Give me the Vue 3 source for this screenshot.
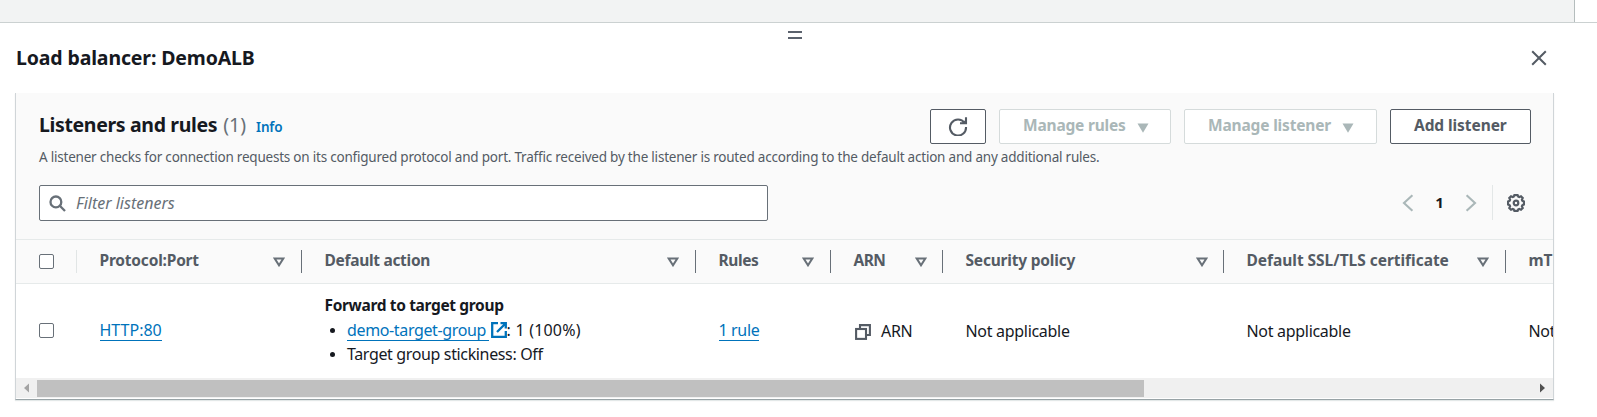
<script setup>
const columns = [
  { label: 'Protocol:Port', cls: 'c-port' },
  { label: 'Default action', cls: 'c-action' },
  { label: 'Rules', cls: 'c-rules' },
  { label: 'ARN', cls: 'c-arn' },
  { label: 'Security policy', cls: 'c-policy' },
  { label: 'Default SSL/TLS certificate', cls: 'c-cert' }
]
</script>

<template>
  <div class="page">
    <div class="backdrop"><div class="backdrop-main"></div></div>
    <section class="panel">
      <div class="handle"><i></i><i></i></div>
      <header class="panel-head">
        <h2 class="title">Load balancer: DemoALB</h2>
        <svg class="close" width="16" height="16" viewBox="0 0 16 16"><path d="M1.2 1.2 14.8 14.8M14.8 1.2 1.2 14.8" /></svg>
      </header>

      <div class="card">
        <div class="tools">
          <div class="row-top">
            <div class="heading">
              <span class="h-text">Listeners and rules</span>
              <span class="h-count">(1)</span>
              <a class="h-info">Info</a>
            </div>
            <div class="buttons">
              <button class="btn refresh">
                <svg width="20" height="20" viewBox="0 0 20 20"><path class="arc" d="M16.6 7A8 8 0 1 0 18 11" /><path class="arc" d="M18 1.2V7.2H12" /><path class="head" d="M13.6 7.2 18 3.6V7.2Z" /></svg>
              </button>
              <button class="btn off rules"><span class="t-mr">Manage rules</span><svg width="12" height="10" viewBox="0 0 12 10"><path d="M0.5 0.6H11.5L6 9.8Z" /></svg></button>
              <button class="btn off listener"><span class="t-ml">Manage listener</span><svg width="12" height="10" viewBox="0 0 12 10"><path d="M0.5 0.6H11.5L6 9.8Z" /></svg></button>
              <button class="btn add"><span class="t-add">Add listener</span></button>
            </div>
          </div>
          <p class="desc">A listener checks for connection requests on its configured protocol and port. Traffic received by the listener is routed according to the default action and any additional rules.</p>
          <div class="row-filter">
            <div class="search">
              <svg width="17" height="17" viewBox="0 0 17 17"><circle cx="6.9" cy="6.9" r="5.4" /><path d="M10.8 10.8 16 16" /></svg>
              <span class="t-ph">Filter listeners</span>
            </div>
            <div class="pager">
              <svg class="chev" width="12" height="18" viewBox="0 0 12 18"><path d="M10.4 1.3 2 9l8.4 7.7" /></svg>
              <b class="num">1</b>
              <svg class="chev" width="12" height="18" viewBox="0 0 12 18"><path d="M1.6 1.3 10 9l-8.4 7.7" /></svg>
              <div class="gear">
                <svg width="18" height="18" viewBox="0 0 18 18"><path d="M7.4 1.100h3.200l.7 1.600 1 .4 1.700-.8 1.700 1.700-.8 1.700.4 1 1.600.700v3.200l-1.600.700-.4 1 .8 1.700-1.700 1.700-1.700-.8-1 .4-.7 1.600H7.400l-.7-1.600-1-.4-1.700.8-1.700-1.700.8-1.700-.4-1L1.100 10.600V7.400l1.600-.7.4-1-.8-1.700L4 2.300l1.700.8 1-.4Z" /><circle cx="9" cy="9" r="2.300" /></svg>
              </div>
            </div>
          </div>
        </div>

        <div class="grid head">
          <div class="cell check"><span class="box"></span></div>
          <div v-for="c in columns" :key="c.label" class="cell sortable">
            <span :class="c.cls">{{ c.label }}</span>
            <svg width="12" height="10" viewBox="0 0 12 10"><path d="M1.7 1.5H10.3L6 8.3Z" /></svg>
          </div>
          <div class="cell"><span class="c-mtls">mTLS</span></div>
        </div>

        <div class="grid body">
          <div class="cell check"><span class="box"></span></div>
          <div class="cell"><a class="link t-http">HTTP:80</a></div>
          <div class="cell action">
            <b class="t-fwd">Forward to target group</b>
            <ul>
              <li><a class="link t-dtg">demo-target-group</a><svg class="ext" width="16" height="16" viewBox="0 0 16 16"><path d="M7 1.2H1.2V14.8H14.8V9M9.5 1.2H14.8V6.5M14.5 1.5 6 10" /></svg><span class="t-pct">: 1 (100%)</span></li>
              <li><span class="t-stick">Target group stickiness: Off</span></li>
            </ul>
          </div>
          <div class="cell"><a class="link t-rule">1 rule</a></div>
          <div class="cell arn">
            <svg width="16" height="16" viewBox="0 0 16 16"><path class="back" d="M5 4V1.1H14.9V11H12" /><rect x="1.1" y="5" width="9.9" height="9.9" /></svg>
            <span class="t-arn">ARN</span>
          </div>
          <div class="cell"><span class="t-na">Not applicable</span></div>
          <div class="cell"><span class="t-na">Not applicable</span></div>
          <div class="cell"><span class="t-na">Not applicable</span></div>
        </div>

        <div class="scroll">
          <svg width="21" height="20" viewBox="0 0 21 20"><path d="M8 10 13 5.5V14.5Z" fill="#a3a3a3" /></svg>
          <div class="track"><div class="thumb"></div></div>
          <svg width="21" height="20" viewBox="0 0 21 20"><path d="M13 10 8 5.5V14.5Z" fill="#505050" /></svg>
        </div>
      </div>
    </section>
  </div>
</template>

<style>
html, body { background: #fff; overflow: hidden; }
</style>

<style scoped>
* { box-sizing: border-box; }
.page { width: 1597px; height: 417px; overflow: hidden; background: #fff; color: #16191f; font: 16px/24px "Noto Sans", sans-serif; white-space: nowrap; }
svg { display: block; flex: none; fill: none; }
.backdrop { height: 23px; border-bottom: 1px solid #cbd1d1; }
.backdrop-main { width: 1575px; height: 22px; background: #f2f3f3; border-right: 1px solid #b5bdbd; }
.handle { height: 15px; padding: 7.5px 0 0 788px; display: flex; flex-direction: column; gap: 4px; }
.handle i { width: 14px; height: 2px; background: #5b626d; flex: none; }
.panel-head { height: 55px; display: flex; justify-content: space-between; padding: 6px 50px 0 16px; }
.title { margin: 0; font-size: 19.5px; line-height: 28px; font-weight: 700; letter-spacing: -0.14px; }
.close { margin: 6px 0 0; stroke: #545b64; stroke-width: 2; }
.card { width: 1539px; height: 307px; margin-left: 15px; border: 1px solid #d0d5d8; border-top: 0; border-bottom-color: #98a3a6; box-shadow: 0 1px 1px #e3e8e8; overflow: hidden; }
.tools { height: 146px; background: #fafafa; padding: 16px 22px 0 23px; }
.row-top { display: flex; justify-content: space-between; height: 35px; }
.heading { display: flex; align-items: baseline; height: 35px; line-height: 32px; font-size: 19.5px; }
.h-text { font-weight: 700; letter-spacing: -0.35px; }
.h-count { color: #687078; margin-left: 6px; }
.h-info { color: #0073bb; font-size: 13.5px; font-weight: 600; margin-left: 10px; letter-spacing: -0.2px; }
.buttons { display: flex; gap: 13px; }
.btn { height: 35px; padding: 0 0 3px 23px; border: 1px solid #545b64; border-radius: 2px; background: #fff; color: #545b64; font: 700 15.5px/24px "Noto Sans", sans-serif; display: flex; align-items: center; text-align: left; }
.btn.off { color: #aab7b8; border-color: #d5dbdb; }
.btn.off svg { fill: #aab7b8; margin: 5px 0 0 11px; }
.btn.refresh { width: 56px; padding: 0 0 1px 17px; }
.refresh .arc { stroke: #545b64; stroke-width: 2.1; }
.refresh .head { fill: #545b64; }
.rules { width: 172px; }
.listener { width: 193px; }
.add { width: 141px; }
.t-mr { letter-spacing: -0.2px; }
.t-ml { letter-spacing: -0.17px; }
.t-add { letter-spacing: -0.08px; }
.desc { margin: 3px 0 0; height: 22px; line-height: 21px; font-size: 13.5px; letter-spacing: -0.215px; color: #545b64; }
.row-filter { margin-top: 16px; display: flex; justify-content: space-between; height: 36px; }
.search { width: 729px; height: 36px; background: #fff; border: 1px solid #687078; border-radius: 2px; display: flex; align-items: center; padding-left: 9px; gap: 10px; color: #687078; font-style: italic; }
.search svg { stroke: #687078; stroke-width: 2.3; }
.pager { display: flex; align-items: center; padding-bottom: 1px; }
.chev { stroke: #aab7b8; stroke-width: 2.1; }
.num { width: 51px; text-align: center; font-size: 15px; padding-bottom: 1px; }
.gear { height: 35px; margin-left: 15px; width: 39px; padding: 9px 0 0 14px; border-left: 1px solid #e3e7e7; }
.gear svg { stroke: #545b64; stroke-width: 2.2; }
.grid { display: grid; grid-template-columns: 61px 225px 394px 135px 112px 281px 282px 120px; width: 1610px; }
.grid.head { height: 45px; background: #fafafa; border-top: 1px solid #e6eaea; border-bottom: 1px solid #e6eaea; color: #545b64; font-size: 15.5px; font-weight: 700; align-items: center; }
.cell { padding-left: 22.5px; display: flex; align-items: center; }
.cell.check { padding-left: 23px; }
.head .cell { height: 23px; }
.head .cell > span:not(.box) { padding-bottom: 3px; }
.head .check { border-right: 1px solid #e1e5e5; }
.head .sortable { border-right: 1px solid #687078; justify-content: space-between; padding-right: 16px; }
.head .sortable:nth-child(5), .head .sortable:nth-child(6) { padding-right: 15px; }
.c-port, .c-policy { letter-spacing: -0.2px; }
.c-action { letter-spacing: -0.3px; }
.c-rules { letter-spacing: -0.4px; }
.c-arn { letter-spacing: -0.6px; }
.c-cert { letter-spacing: -0.03px; }
.sortable svg { stroke: #687078; stroke-width: 2; margin-top: 1px; }
.box { width: 15px; height: 15px; border: 1px solid #687078; border-radius: 2px; background: #fff; }
.body { height: 94px; background: #fff; }
.body .cell { padding-bottom: 1px; }
.link { color: #0073bb; border-bottom: 1px solid #0073bb; line-height: 20px; }
.body .action { flex-direction: column; align-items: flex-start; justify-content: flex-start; padding-top: 9px; padding-bottom: 0; }
.t-fwd { font-size: 15.5px; letter-spacing: -0.35px; }
ul { list-style: none; margin: 1px 0 0; padding: 0; }
li { display: flex; align-items: center; height: 24px; padding-left: 22.5px; }
li::before { content: ""; width: 5px; height: 5px; border-radius: 50%; background: #16191f; margin: 0 12px 0 -17px; }
.t-dtg { letter-spacing: -0.36px; padding-right: 3px; }
.t-pct { letter-spacing: 0.2px; }
.t-stick { letter-spacing: -0.36px; }
.t-rule { letter-spacing: -0.35px; }
.t-na { letter-spacing: -0.3px; }
.ext { stroke: #0073bb; stroke-width: 2.3; margin-left: 1.5px; }
.arn svg { stroke: #545b64; stroke-width: 2.1; margin: 2px 10px 0 1.5px; }
.t-arn { letter-spacing: -0.3px; padding-top: 1px; }
.scroll { height: 20px; display: flex; background: #f0f0f0; }
.track { flex: 1; padding-top: 2px; }
.thumb { width: 1107px; height: 17px; background: #c0c0c0; }
</style>
